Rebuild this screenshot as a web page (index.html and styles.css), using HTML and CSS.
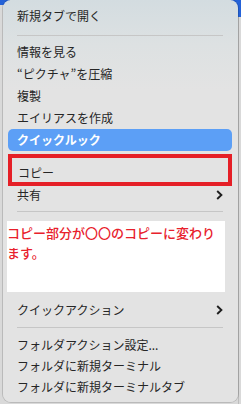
FILE: index.html
```html
<!DOCTYPE html>
<html lang="ja">
<head>
<meta charset="utf-8">
<link rel="stylesheet" href="styles.css">
</head>
<body>
<div class="menu">
  <div class="item first">新規タブで開く</div>
  <div class="sep sep-a"></div>
  <div class="item">情報を見る</div>
  <div class="item">“ピクチャ”を圧縮</div>
  <div class="item">複製</div>
  <div class="item">エイリアスを作成</div>
  <div class="item active">クイックルック</div>
  <div class="marked">
    <div class="item inner">コピー</div>
  </div>
  <div class="item short sub">
    <span>共有</span>
    <svg class="chev" width="7" height="10" viewBox="0 0 7 10"><polyline points="1.2,1 5.4,5 1.2,9" fill="none" stroke="#1e1e1e" stroke-width="1.9"/></svg>
  </div>
  <div class="sep sep-b"></div>
  <div class="note">コピー部分が〇〇のコピーに変わります。</div>
  <div class="item sub qa">
    <span>クイックアクション</span>
    <svg class="chev" width="7" height="10" viewBox="0 0 7 10"><polyline points="1.2,1 5.4,5 1.2,9" fill="none" stroke="#1e1e1e" stroke-width="1.9"/></svg>
  </div>
  <div class="sep sep-c"></div>
  <div class="item tight">フォルダアクション設定...</div>
  <div class="item tight">フォルダに新規ターミナル</div>
  <div class="item tight">フォルダに新規ターミナルタブ</div>
</div>
</body>
</html>
```

FILE: styles.css
```css
html, body {
  margin: 0;
  padding: 0;
}
body {
  width: 241px;
  height: 404px;
  overflow: hidden;
  background:
    linear-gradient(#2462d8, #2462d8) left top / 10px 5px no-repeat,
    linear-gradient(#2462d8, #2462d8) right top / 10px 17px no-repeat,
    linear-gradient(90deg, #d9d9d9 0 238px, #bdbdbd 238px 239px, #d9d9d9 239px);
  font-family: "Noto Sans CJK JP", "Noto Sans", sans-serif;
  font-size: 12px;
  color: #262626;
}
.menu {
  margin-left: 3px;
  width: 235px;
  height: 402px;
  box-sizing: border-box;
  padding: 5px 6px 5px 5px;
  border-radius: 8px;
  background: linear-gradient(#d3dce0 0, #dde1e2 45px, #e3e3e3 90px, #e3e3e3 100%);
  box-shadow: 0 0 0 1px rgba(0, 0, 0, 0.14);
  display: flex;
  flex-direction: column;
}
.item {
  height: 22px;
  line-height: 22px;
  padding: 0 9px;
  white-space: nowrap;
  display: flex;
  align-items: center;
  justify-content: space-between;
}
.item.tight {
  height: 21px;
  line-height: 21px;
}
.item.short {
  height: 18px;
  line-height: 18px;
}
.active {
  background: #5c9ff6;
  color: #ffffff;
  font-weight: 700;
  border-radius: 5px;
}
.sep {
  height: 1px;
  background: #c6c6c6;
  margin: 0 9px 0 9px;
}
.sep-a { margin-top: 8px; margin-bottom: 5px; }
.sep-b { margin-top: 7px; margin-bottom: 9px; }
.sep-c { margin-top: 6px; margin-bottom: 6px; }
.marked {
  margin-top: 3px;
  height: 32px;
  box-sizing: border-box;
  border: 4px solid #e51f27;
  padding-top: 6px;
}
.marked .inner {
  height: 18px;
  line-height: 18px;
  padding-left: 6px;
}
.note {
  margin-left: -1px;
  width: 218px;
  height: 71px;
  box-sizing: border-box;
  padding-top: 2px;
  background: #ffffff;
  color: #e8212c;
  font-size: 13px;
  line-height: 20px;
  font-weight: 500;
}
.qa {
  margin-top: 7px;
}
.chev {
  display: block;
}
```
